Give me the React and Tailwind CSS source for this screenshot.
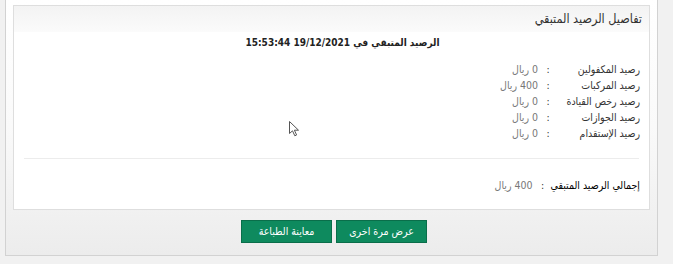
import React from 'react';

const ROWS = [
  { label: 'رصيد المكفولين', value: '0 ريال' },
  { label: 'رصيد المركبات', value: '400 ريال' },
  { label: 'رصيد رخص القيادة', value: '0 ريال' },
  { label: 'رصيد الجوازات', value: '0 ريال' },
  { label: 'رصيد الإستقدام', value: '0 ريال' },
];

const BalanceRow = ({ label, value, strong }) => (
  <div className="flex items-center h-[16px] whitespace-nowrap">
    <span className={`min-w-[86px] pl-[2px] ${strong ? 'text-black' : 'text-[#333]'}`}>{label}</span>
    <span className="w-[12px] text-center text-[#333]">:</span>
    <span className="pr-[4px] text-[#777]">{value}</span>
  </div>
);

const Cursor = () => (
  <svg className="absolute left-[289px] top-[121px]" width="11" height="16" viewBox="0 0 11 16">
    <path d="M0.5 0.5 L0.5 12.5 L3.5 9.8 L5.8 14.8 L7.6 14 L5.4 9.2 L9.5 9.2 Z"
          fill="#fff" stroke="#555" strokeWidth="1" strokeLinejoin="round" />
  </svg>
);

export default function App() {
  return (
    <div className="relative w-[673px] h-[264px] overflow-hidden bg-[#f1f1f1] pl-[5px] font-stretch-condensed"
         style={{ fontFamily: '"DejaVu Sans Condensed", "DejaVu Sans", sans-serif' }}>
      <div className="w-[653px] h-[256px] border-x border-b border-[#d2d2d2] bg-gradient-to-b from-white via-[#fafafa] to-[#ececec] pt-[5px] px-[7px]">
        <div dir="rtl" className="h-[205px] border border-[#dedede] bg-white text-[10.5px]">
          <div className="h-[26px] flex items-center pr-[7px] bg-gradient-to-b from-[#f3f3f3] to-[#fbfbfb] text-[12.5px] text-[#333]">
            تفاصيل الرصيد المتبقي
          </div>
          <div className="mt-[3px] pl-[22px] text-center font-bold text-[#222] text-[10px]">
            الرصيد المتبقي في 19/12/2021 15:53:44
          </div>
          <div className="mt-[12px] pr-[9px]">
            {ROWS.map((r) => (
              <BalanceRow key={r.label} label={r.label} value={r.value} />
            ))}
          </div>
          <div className="mx-[10px] mt-[16px] border-t border-[#ececec]" />
          <div className="mt-[19px] pr-[9px]">
            <BalanceRow label="إجمالي الرصيد المتبقي" value="400 ريال" strong />
          </div>
        </div>
        <div dir="rtl" className="flex justify-center gap-[4px] mt-[10px] pl-[5px]">
          <button className="w-[91px] h-[23px] bg-[#0e8a5e] border border-[#0a6e4a] text-white text-[10.5px]">
            عرض مرة اخرى
          </button>
          <button className="w-[91px] h-[23px] bg-[#0e8a5e] border border-[#0a6e4a] text-white text-[10.5px]">
            معاينة الطباعة
          </button>
        </div>
      </div>
      <Cursor />
    </div>
  );
}
